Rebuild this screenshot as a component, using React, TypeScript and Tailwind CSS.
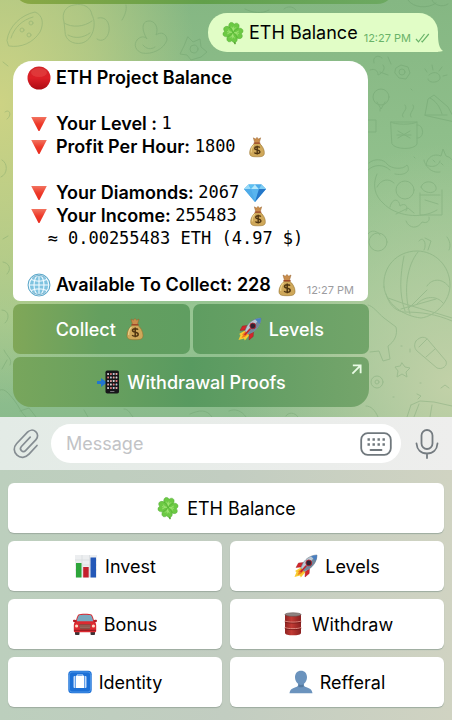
import type { ReactNode } from 'react'

interface IconProps {
  className?: string
}

function Clover({ className = 'w-6 h-6' }: IconProps) {
  return (
    <svg viewBox="0 0 24 24" className={className} aria-hidden="true">
      <path d="M12 12c.3 4 .8 7.500 2 10.500" stroke="#4f9a2a" strokeWidth="1.600" fill="none" strokeLinecap="round" />
      {[0, 90, 180, 270].map((angle) => (
        <g key={angle} transform={`rotate(${angle + 8} 12 11.500)`}>
          <path d="M12 11.500C8.500 9.500 6 6.500 7 3.500c.7-2 3.500-2.500 5-.3 1.500-2.200 4.300-1.700 5 .3 1 3-1.500 6-5 8z" fill="#6cc944" stroke="#45a329" strokeWidth=".4" />
          <path d="M12 10.500V5.500M12 9l-2.200-3M12 9l2.200-3" stroke="#a5e678" strokeWidth=".8" fill="none" />
        </g>
      ))}
    </svg>
  )
}

function RedCircle({ className = 'w-6 h-6' }: IconProps) {
  return (
    <svg viewBox="0 0 24 24" className={className} aria-hidden="true">
      <defs>
        <linearGradient id="ball" x1="0" y1="0" x2="0" y2="1">
          <stop offset="0" stopColor="#d0242a" />
          <stop offset=".5" stopColor="#dc1f26" />
          <stop offset="1" stopColor="#ad0b14" />
        </linearGradient>
      </defs>
      <circle cx="12" cy="12" r="11.500" fill="url(#ball)" />
      <ellipse cx="12" cy="6.500" rx="8" ry="4.500" fill="#f0605a" opacity=".35" />
    </svg>
  )
}

function RedTriangle({ className = 'w-6 h-6' }: IconProps) {
  return (
    <svg viewBox="0 0 24 24" className={className} aria-hidden="true">
      <defs>
        <linearGradient id="tri" x1="0" y1="0" x2="0" y2="1">
          <stop offset="0" stopColor="#f2735f" />
          <stop offset=".5" stopColor="#ee3a2a" />
          <stop offset="1" stopColor="#e8291c" />
        </linearGradient>
      </defs>
      <path d="M4.200 5h15.600L12.500 19h-1z" fill="url(#tri)" />
    </svg>
  )
}

function MoneyBag({ className = 'w-6 h-6' }: IconProps) {
  return (
    <svg viewBox="0 0 24 24" className={className} aria-hidden="true">
      <path d="M8 2l2.200 1.200L12 1.500l1.800 1.700L16 2l-1.700 6H9.700z" fill="#c98d4c" stroke="#96612a" strokeWidth=".5" />
      <path d="M9.500 8h5c3 2.200 5.500 6.500 5.500 10.200 0 3.700-1.800 4.500-8 4.500s-8-.8-8-4.500C4 14.500 6.500 10.200 9.500 8z" fill="#cfa85a" stroke="#94702c" strokeWidth=".6" />
      <path d="M8.500 10C6.500 12 5.500 15 5.700 18" stroke="#ecd08a" strokeWidth="1.200" fill="none" />
      <path d="M9 7.800h6" stroke="#a04a2a" strokeWidth="1.500" strokeLinecap="round" />
      <path d="M15 12.600c-.8-1.200-5.500-1.600-5.500.9 0 2.300 5.700 1.300 5.700 3.800 0 2.700-5.200 2.300-6 .7M12.200 10.500v9.800" stroke="#4f3410" strokeWidth="1.500" fill="none" />
    </svg>
  )
}

function Diamond({ className = 'w-6 h-6' }: IconProps) {
  return (
    <svg viewBox="0 0 24 24" className={className} aria-hidden="true">
      <path d="M5.500 3.500h13L23 8 12 21 1 8z" fill="#45a8e8" />
      <path d="M5.500 3.500L8 8H1z" fill="#9bdcf8" />
      <path d="M5.500 3.500h6.500L8 8z" fill="#5cc0f2" />
      <path d="M12 3.500L16 8H8z" fill="#b5e8fb" />
      <path d="M12 3.500h6.500L16 8z" fill="#4cabea" />
      <path d="M18.500 3.500L23 8h-7z" fill="#80cdf3" />
      <path d="M1 8h7l4 13z" fill="#4fabe8" />
      <path d="M8 8h8l-4 13z" fill="#58b4ee" />
      <path d="M16 8h7L12 21z" fill="#2577c9" />
    </svg>
  )
}

function Globe({ className = 'w-6 h-6' }: IconProps) {
  return (
    <svg viewBox="0 0 24 24" className={className} aria-hidden="true">
      <circle cx="12" cy="12" r="11" fill="#7fc3e0" stroke="#4d9cc0" strokeWidth=".8" />
      <g fill="none" stroke="#f3fbff" strokeWidth="1.100">
        <circle cx="12" cy="12" r="9.800" />
        <ellipse cx="12" cy="12" rx="5" ry="9.800" />
        <path d="M12 2v20M2 12h20M4.200 6.500c4.500 2 11 2 15.600 0M4.200 17.500c4.500-2 11-2 15.600 0" />
      </g>
      <path d="M5 5.500c4-4 10-4 14 0M5 18.500c4 4 10 4 14 0" stroke="#3f8fb5" strokeWidth=".7" fill="none" />
    </svg>
  )
}

function Rocket({ className = 'w-6 h-6' }: IconProps) {
  return (
    <svg viewBox="0 0 24 24" className={className} aria-hidden="true">
      <path d="M7 13.500L1 17l1.500 1-2 5 5.500-1.500.8 2L11.500 18z" fill="#f8cb30" />
      <path d="M7.500 14.500L4 17.500l1 .5-1.500 3 3.500-1.300L10 17z" fill="#f07b1e" />
      <path d="M9.500 8.500L4.500 9 2 13.500l5-.5zM15.500 14.500l-.3 5L11 23l.3-5.500z" fill="#d3262c" stroke="#95141d" strokeWidth=".4" />
      <path d="M23 1c-6 .2-10.500 3-14 8L6.800 14l3.400 3.300L15 15c5-3.500 7.800-8 8-14z" fill="#b9c6d2" stroke="#63717e" strokeWidth=".5" />
      <path d="M23 1c-.2 6-3 10.500-8 14l-4.800 2.300-1.700-1.700z" fill="#71879b" />
      <path d="M23 1c-2.300.1-4.300.5-6 1.300l4.700 4.700C22.500 5.200 22.900 3.200 23 1z" fill="#4a7fc0" />
      <circle cx="14.800" cy="8.900" r="2.900" fill="#302432" stroke="#b32531" strokeWidth=".9" />
      <path d="M12 12L7 17.500" stroke="#c3232c" strokeWidth="1.600" strokeLinecap="round" />
    </svg>
  )
}

function PhoneArrow({ className = 'w-6 h-6' }: IconProps) {
  const rows = [4, 7.5, 11, 14.5, 18]
  const colors = ['#d8d8d8', '#e07a7a', '#b6c7d6', '#e8a2a0']
  return (
    <svg viewBox="0 0 24 24" className={className} aria-hidden="true">
      <path d="M1 11h4V8l6 4.500L5 17v-3H1z" fill="#2277cf" />
      <rect x="9.500" y=".5" width="13.500" height="23" rx="1.800" fill="#17171a" />
      {rows.map((y, row) =>
        [11.2, 14, 16.8, 19.6].map((x, col) => (
          <rect key={`${x}-${y}`} x={x} y={y - 1} width="1.800" height="1.900" rx=".4" fill={colors[(row + col) % 4]} />
        ))
      )}
      <rect x="14" y="21" width="4.500" height="1" rx=".5" fill="#77777c" />
    </svg>
  )
}

function BarChart({ className = 'w-6 h-6' }: IconProps) {
  return (
    <svg viewBox="0 0 24 24" className={className} aria-hidden="true">
      <rect x="1" y="1" width="22" height="22.500" fill="#eceef0" />
      <path d="M1 6h22M1 11h22M1 16h22M8 1v22M15.500 1v22" stroke="#d7dadd" strokeWidth=".7" />
      <rect x="2" y="9" width="5.500" height="14.500" fill="#2da53a" />
      <rect x="9.200" y="13" width="5.500" height="10.500" fill="#c4202d" />
      <rect x="16.500" y="3.500" width="5.500" height="20" fill="#2458b8" />
    </svg>
  )
}

function Car({ className = 'w-6 h-6' }: IconProps) {
  return (
    <svg viewBox="0 0 24 24" className={className} aria-hidden="true">
      <path d="M2 18h4.500v4.200c0 .5-.4.800-.9.800H2.900c-.5 0-.9-.3-.9-.8zM17.500 18H22v4.200c0 .5-.4.800-.9.800h-2.700c-.5 0-.9-.3-.9-.8z" fill="#3a3336" />
      <path d="M5.500 2.500C7 1.500 17 1.500 18.500 2.500c1 .8 2.200 4.500 2.800 7 1.200.8 1.900 2 1.900 4V19c0 .9-.6 1.300-1.300 1.300H2.100C1.400 20.300.8 19.900.8 19v-5.500c0-2 .7-3.200 1.900-4 .6-2.500 1.800-6.200 2.800-7z" fill="#dc2a31" />
      <path d="M6 3.300c2-.8 10-.8 12 0 .8 1 1.800 3.800 2.200 6H3.800c.4-2.200 1.400-5 2.200-6z" fill="#79a9bf" />
      <path d="M0 8.500c0-1 2.800-1 3.500.3l-.5 1.400H1.200C.4 10.200 0 9.500 0 8.500zM24 8.500c0-1-2.800-1-3.500.3l.5 1.400h1.800c.8 0 1.200-.7 1.200-1.700z" fill="#b41c24" />
      <path d="M6 12.300h12l-1.300 5.200H7.300z" fill="#7f4a40" />
      <path d="M6.500 14h11M7 15.700h10" stroke="#b98378" strokeWidth=".6" />
      <circle cx="3.600" cy="14" r="1.600" fill="#ffd9c4" />
      <circle cx="20.400" cy="14" r="1.600" fill="#ffd9c4" />
      <path d="M1 18.300h22" stroke="#941820" strokeWidth="1" />
    </svg>
  )
}

function OilDrum({ className = 'w-6 h-6' }: IconProps) {
  return (
    <svg viewBox="0 0 24 24" className={className} aria-hidden="true">
      <defs>
        <linearGradient id="drum" x1="0" y1="0" x2="1" y2="0">
          <stop offset="0" stopColor="#8f2422" />
          <stop offset=".4" stopColor="#c23a34" />
          <stop offset="1" stopColor="#8a2020" />
        </linearGradient>
      </defs>
      <path d="M4 2.500h16V21c0 1.500-3.500 2.300-8 2.300S4 22.500 4 21z" fill="url(#drum)" />
      <ellipse cx="12" cy="2.500" rx="8" ry="1.800" fill="#8e8482" stroke="#5c4a48" strokeWidth=".5" />
      <path d="M3.700 9c3 1.500 13.600 1.500 16.600 0M3.700 15.500c3 1.500 13.600 1.500 16.600 0" stroke="#e08a80" strokeWidth="1" fill="none" />
      <path d="M3.700 10c3 1.500 13.600 1.500 16.600 0M3.700 16.500c3 1.500 13.600 1.500 16.600 0" stroke="#611213" strokeWidth=".6" fill="none" />
    </svg>
  )
}

function IdentityBadge({ className = 'w-6 h-6' }: IconProps) {
  return (
    <svg viewBox="0 0 24 24" className={className} aria-hidden="true">
      <rect x=".3" y=".8" width="23.400" height="22.400" rx="3.500" fill="#1b6fd6" />
      <rect x="1.500" y="2" width="21" height="20" rx="2.500" fill="none" stroke="#5ea3ee" strokeWidth=".7" />
      <path d="M9 6V5h6v1" fill="none" stroke="#dcecff" strokeWidth="1" />
      <rect x="5.500" y="6" width="13" height="12" rx="1" fill="#c3dcfb" />
      <rect x="8" y="6" width="8" height="12" fill="#fff" />
      <path d="M7.500 6v12M16.500 6v12" stroke="#4f92e4" strokeWidth=".8" />
    </svg>
  )
}

function Person({ className = 'w-6 h-6' }: IconProps) {
  return (
    <svg viewBox="0 0 24 24" className={className} aria-hidden="true">
      <path d="M12 .8c3.700 0 6 2.700 6 6.500 0 2.800-1.300 5-3 6.400-.6 2 .3 2.800 2.500 3.600 3.500 1.200 5.500 2.300 6 6H.5c.5-3.700 2.500-4.800 6-6 2.200-.8 3.100-1.600 2.500-3.600-1.700-1.400-3-3.600-3-6.400C6 3.500 8.300.8 12 .8z" fill="#6b93bd" />
      <path d="M9.500 14.200c1.600 1 3.400 1 5 0-.2 1 0 1.700.3 2.200-1.800 1.200-3.800 1.200-5.600 0 .3-.5.500-1.200.3-2.200z" fill="#54799f" />
    </svg>
  )
}

// Line doodles scattered over the chat wallpaper
function Doodles() {
  return (
    <svg viewBox="0 0 452 417" preserveAspectRatio="xMinYMin slice" className="absolute inset-0 w-full h-full" aria-hidden="true">
      <g fill="none" stroke="#5f9360" strokeWidth="1" strokeLinecap="round" strokeLinejoin="round" opacity=".28">
        {/* left of the outgoing bubble */}
        <path d="M7 40c2-14 14-25 28-28 8 3 9 12 5 20-7 11-19 16-31 14zM11 38c3-10 11-18 22-21" />
        <circle cx="22" cy="30" r="2" />
        <circle cx="31" cy="23" r="2" />
        <circle cx="29" cy="35" r="2" />
        <path d="M64 22c-3-9 2-16 10-17 9-2 17 2 18 10 5 9 1 25-10 28-9 2-17-3-17-11zM64 23c8 5 20 4 28-2M68 35c7 4 15 3 22-2M98 18c8-2 12 5 11 13-1 7-7 12-12 8" />
        <path d="M122 20c3-5 5-10 4-15M137 40c3-4 8-4 10-1-5-8-6-17 1-18 7-1 11 7 8 14 5-4 11-1 11 5-3 9-15 15-25 13-6-2-9-8-5-13zM143 45c3 4 8 5 12 2" />
        <path d="M188 37l5 5 7-3 1 8 6 5-6 5-10 3-4-5-7-1 4-8z" />
        <circle cx="194" cy="49" r="4" />
        <path d="M3 62l5 4M5 112c5-4 7 4 2 7M2 160c6 3 6 14-1 17M3 239l5-3M3 262c6 1 9 7 4 12" />
        {/* column right of the message */}
        <path d="M245 9c8 4 17 5 24 1M284 9c3-3 9-3 12 1M408 0c5 8 20 9 28 3M432 0c2 5 10 8 16 4" />
        <path d="M370 70c5-2 8 1 8 5 5-2 8-7 5-10M374 63c-2-6 4-9 8-5M388 57l3 7M380 72l8 3" />
        <path d="M396 68l5-3 7 2 2 6-4 6-7-1-4-5z" />
        <circle cx="402" cy="72" r="3" />
        <path d="M429 75c4-4 10-3 11 2 1 6-12 7-12 2M427 72l-2-3M433 70l-1-5M439 71l3-4M443 76l4-1" />
        <circle cx="381" cy="97" r="8" />
        <path d="M377 102l4 7 4-7M380 109v2M411 89l1 1M425 115l3-16 6-4 14 12 8 15zM425 115h22M430 98c6 3 10 9 12 16" />
        <path d="M391 122h26v22c-2 6-22 6-25 0zM391 122c3 3 22 3 26 0M417 125c7-1 8 14 0 13M403 117c-3-4 6-7 2-12M411 117c-3-4 5-8 2-12M398 131l12 7M410 131l-12 7M397 135h14" />
        <path d="M368 120h8v12h-8M414 157l1 1M426 165c1-8 8-12 15-9l2-7 3 7c9 2 12 14 7 22M426 165c3 5 8 8 14 7M433 160l2 2M441 163l2 2M368 170c6-6 16-6 22 0" />
        <path d="M369 163c5-5 15-4 18 1 4 5 16 6 20 1 5 7-4 11-12 9M377 174c-5 11-2 22 6 29 12 13 38 17 54 7M377 187c4-8 12-9 17-4" />
        <circle cx="405" cy="190" r="9" />
        <path d="M390 207c2-9 9-9 10-1 5-4 9 1 6 5M396 214l12-6 6 5M420 193v22h22v-25M420 195h20M421 187c2-7 13-7 15 0s-12 8-15 0M425 200l13 4M406 221c3 8 12 8 16 1 6 2 8-2 7-5" />
        <circle cx="378" cy="242" r="9" />
        <path d="M419 241c5-6 8 4 5 9M425 238l6 3-3 9M447 237c3 4 4 9 2 13M368 234c3-5 10-3 12 1M424 160c0 8 14 9 16 1" />
        <path d="M384 287c-2-20 13-36 33-36 18 0 33 15 33 34 0 16-14 31-29 33-18-2-35-14-37-31zM404 256c-4 20-5 38 1 55M418 252c-11 13-15 39-8 62M427 286c5-8 16-8 22 1M417 304c7-8 20-9 26-1" />
        <path d="M386 294c3 10 8 16 17 18 18 0 33 2 49 9M388 298c20 8 43 13 64 20M401 309l35-10M427 290l-19 19" />
        <path d="M368 305c5 1 9 7 16 13l12 9c2 8-2 15-8 19l2 13-7 2-4-10-9 1" />
        <path d="M416 341c4-5 10-5 13 0l17 20c2 5-4 9-9 7l-20-17c-3-3-3-7-1-10zM419 347l8-8M426 357l9-8M401 346l1 0M410 349v3" />
        <path d="M402 363l3 4 5 1-4 4 1 5-5-3-5 3 1-6-3-4 5-1z" />
        <circle cx="377" cy="382" r="6" />
        <circle cx="377" cy="382" r="2" />
        <path d="M420 383l1 0M393 397l1 0M417 394l4 2-3 3M441 388l4-3 4 3M411 405l9-4 14 1 18 4M411 405l-4 12M419 404l-5 13M432 405l-2 12M366 406c5 0 9 4 12 11" />
        {/* below the buttons */}
        <path d="M2 310c7 0 8 9 3 13M4 350c3 7 9 9 6 15M7 360l-5 9M0 390c5-2 9 4 14 10 5 6 7 13 12 17M20 411l9-3 7 9M84 410l4 7M124 409c5 0 6 5 9 8M190 414c9-4 17-5 22 3M229 411c6-3 13 0 17 6M286 416c2-4 9-4 12 1" />
      </g>
    </svg>
  )
}

interface StatLineProps {
  icon?: ReactNode
  label?: string
  value?: string
  trailing?: ReactNode
}

function StatLine({ icon, label, value, trailing }: StatLineProps) {
  return (
    <p className="flex items-center h-[23px] whitespace-pre">
      {icon}
      {label && <span className="ml-[5px] font-semibold">{label}</span>}
      {value && <span className="font-['DejaVu_Sans_Mono',monospace] text-[17px]">{value}</span>}
      {trailing}
    </p>
  )
}

const keyboardRows = [
  [{ label: 'ETH Balance', Icon: Clover }],
  [
    { label: 'Invest', Icon: BarChart },
    { label: 'Levels', Icon: Rocket },
  ],
  [
    { label: 'Bonus', Icon: Car },
    { label: 'Withdraw', Icon: OilDrum },
  ],
  [
    { label: 'Identity', Icon: IdentityBadge },
    { label: 'Refferal', Icon: Person },
  ],
]

export default function App() {
  return (
    <div className="min-h-screen flex flex-col font-['Inter',sans-serif] text-[18px] leading-[23px] text-black bg-[#c3cfbe]">
      <main className="relative overflow-hidden pb-[10px] bg-[radial-gradient(ellipse_200px_300px_at_0%_25%,#cdd384_0%,#cbd28499_50%,#cbd28400_100%),radial-gradient(ellipse_220px_240px_at_100%_92%,#c2d1a8_0%,#c2d1a800_100%),linear-gradient(180deg,#85b783_0%,#92c18d_45%,#97c592_75%,#8abb8c_100%)]">
        <Doodles />
        <div className="relative">
          {/* tail end of the previous message's buttons */}
          <div className="flex items-end h-1 overflow-hidden ml-[13px] mr-[57px]">
            <div className="w-full h-[50px] shrink-0 rounded-b-[18px] bg-linear-to-r from-[#8ba844] via-[#62a04b] to-[#6da962]" />
          </div>

          <div className="flex justify-end mt-[9px] mr-[14px]">
            <div className="relative flex items-center h-[39px] pl-[13px] pr-2 rounded-[19px] rounded-br-none bg-[#e1fdc6]">
              <Clover />
              <span className="ml-1">ETH Balance</span>
              <span className="flex items-end gap-1 ml-[6px] mt-[11px] text-[11px] leading-4 text-[#69b368]">
                12:27 PM
                <svg viewBox="0 0 15 10" className="w-[15px] h-[10px] mb-[3px]" fill="none" stroke="currentColor" strokeWidth="1.200" aria-label="Read">
                  <path d="M1 6l2.500 2.800L9.500 1M6.500 8l.8.800L13.800 1" />
                </svg>
              </span>
              <svg viewBox="0 0 12 18" className="absolute -right-[5px] bottom-0 w-3 h-[18px]" aria-hidden="true">
                <path d="M0 0h7c0 8 1 14 5 17-5 1.500-9 .5-12-2z" fill="#e1fdc6" />
              </svg>
            </div>
          </div>

          <div className="ml-[13px] mr-[84px] mt-[9px]">
            <article className="relative py-[5px] pl-[14px] rounded-[19px] rounded-b-[7px] bg-white">
              <StatLine icon={<RedCircle />} label="ETH Project Balance" />
              <StatLine />
              <StatLine icon={<RedTriangle />} label="Your Level : " value="1" />
              <StatLine icon={<RedTriangle />} label="Profit Per Hour: " value="1800 " trailing={<MoneyBag className="w-[22px] h-[22px]" />} />
              <StatLine />
              <StatLine icon={<RedTriangle />} label="Your Diamonds: " value="2067" trailing={<Diamond className="w-6 h-6 ml-1" />} />
              <StatLine icon={<RedTriangle />} label="Your Income: " value="255483 " trailing={<MoneyBag className="w-[22px] h-[22px]" />} />
              <StatLine value="  ≈ 0.00255483 ETH (4.97 $)" />
              <StatLine />
              <StatLine icon={<Globe />} label="Available To Collect: 228" trailing={<MoneyBag className="w-6 h-6 ml-1" />} />
              <time className="absolute right-[14px] bottom-[3px] text-[11px] leading-4 text-[#9c9ca0]">12:27 PM</time>
            </article>
          </div>

          <div className="flex flex-col gap-[3px] ml-[13px] mr-[83px] mt-[3px] font-medium text-white">
            <div className="grid grid-cols-2 gap-[3px]">
              <button className="flex items-center justify-center gap-[7px] h-[50px] rounded-[7px] bg-linear-to-r from-[#80a758] via-[#649f5f] to-[#609e61]">
                Collect <MoneyBag />
              </button>
              <button className="flex items-center justify-center gap-[7px] h-[50px] rounded-[7px] bg-linear-to-r from-[#5f9d61] to-[#72a56a]">
                <Rocket /> Levels
              </button>
            </div>
            <button className="relative flex items-center justify-center gap-[7px] h-[50px] rounded-[7px] rounded-b-[18px] bg-linear-to-r from-[#78a65c] via-[#589a60] to-[#75a56b]">
              <PhoneArrow /> Withdrawal Proofs
              <svg viewBox="0 0 12 12" className="absolute right-[7px] top-[7px] w-[11px] h-[11px]" fill="none" stroke="#e9fbe5" strokeWidth="2" aria-hidden="true">
                <path d="M2 1.500h8.500V10M10.500 1.500l-9 9" />
              </svg>
            </button>
          </div>
        </div>
      </main>

      <form className="flex items-center h-[53px] px-[13px] bg-linear-to-r from-[#e3ebe6] to-[#eeeeed]" onSubmit={(e) => e.preventDefault()}>
        <button type="button" aria-label="Attach" className="shrink-0">
          <svg viewBox="0 0 26 30" className="w-[26px] h-[30px]" fill="none" stroke="#858d92" strokeWidth="1.700" strokeLinecap="round" strokeLinejoin="round">
            <path d="M24 16.500l-8 8.700c-3.500 3.700-8.500 4.200-12 1s-3.700-8-.3-11.700L14.500 3.200c2.300-2.400 5.700-2.700 8.200-.5 2.400 2.200 2.500 5.500.3 7.900L12.800 21.400c-1.300 1.400-3.100 1.500-4.400.3-1.200-1.200-1.200-2.900 0-4.200l8.800-9.300" />
          </svg>
        </button>
        <div className="flex items-center flex-1 min-w-0 h-[39px] ml-3 mr-[14px] pl-[15px] pr-[9px] rounded-full bg-white">
          <input type="text" aria-label="Message" placeholder="Message" className="flex-1 min-w-0 bg-transparent outline-none placeholder:text-[#c2c3c6]" />
          <button type="button" aria-label="Toggle keyboard" className="shrink-0">
            <svg viewBox="0 0 32 24" className="w-8 h-6" fill="none" stroke="#70787d" strokeWidth="1.800">
              <rect x="1.200" y="1.200" width="29.600" height="21.600" rx="6.500" />
              <path d="M7.500 7.500h17.400M7.500 12.500h17.400" strokeWidth="2.400" strokeDasharray="2.400 2.600" />
              <path d="M10.500 18h11" strokeLinecap="round" />
            </svg>
          </button>
        </div>
        <button type="button" aria-label="Record voice" className="shrink-0">
          <svg viewBox="0 0 24 30" className="w-6 h-[30px]" fill="none" stroke="#747b80" strokeWidth="1.800" strokeLinecap="round">
            <rect x="6.500" y="1" width="11" height="19" rx="5.500" />
            <path d="M1.500 14.500C2 20.500 6 24.500 12 24.500s10-4 10.500-10M12 24.500V29" />
          </svg>
        </button>
      </form>

      <section className="flex-1 flex flex-col gap-2 px-2 pt-[13px] pb-[13px] bg-[linear-gradient(90deg,#bccfbd_0%,#c2cdc1_50%,#d0d3c2_100%)]">
        {keyboardRows.map((row, i) => (
          <div key={i} className="flex gap-2">
            {row.map(({ label, Icon }) => (
              <button key={label} className="flex-1 flex items-center justify-center gap-[7px] h-[50px] rounded-[6px] bg-white shadow-[0_1px_1px_#9dab9f]">
                <Icon /> {label}
              </button>
            ))}
          </div>
        ))}
      </section>
    </div>
  )
}
